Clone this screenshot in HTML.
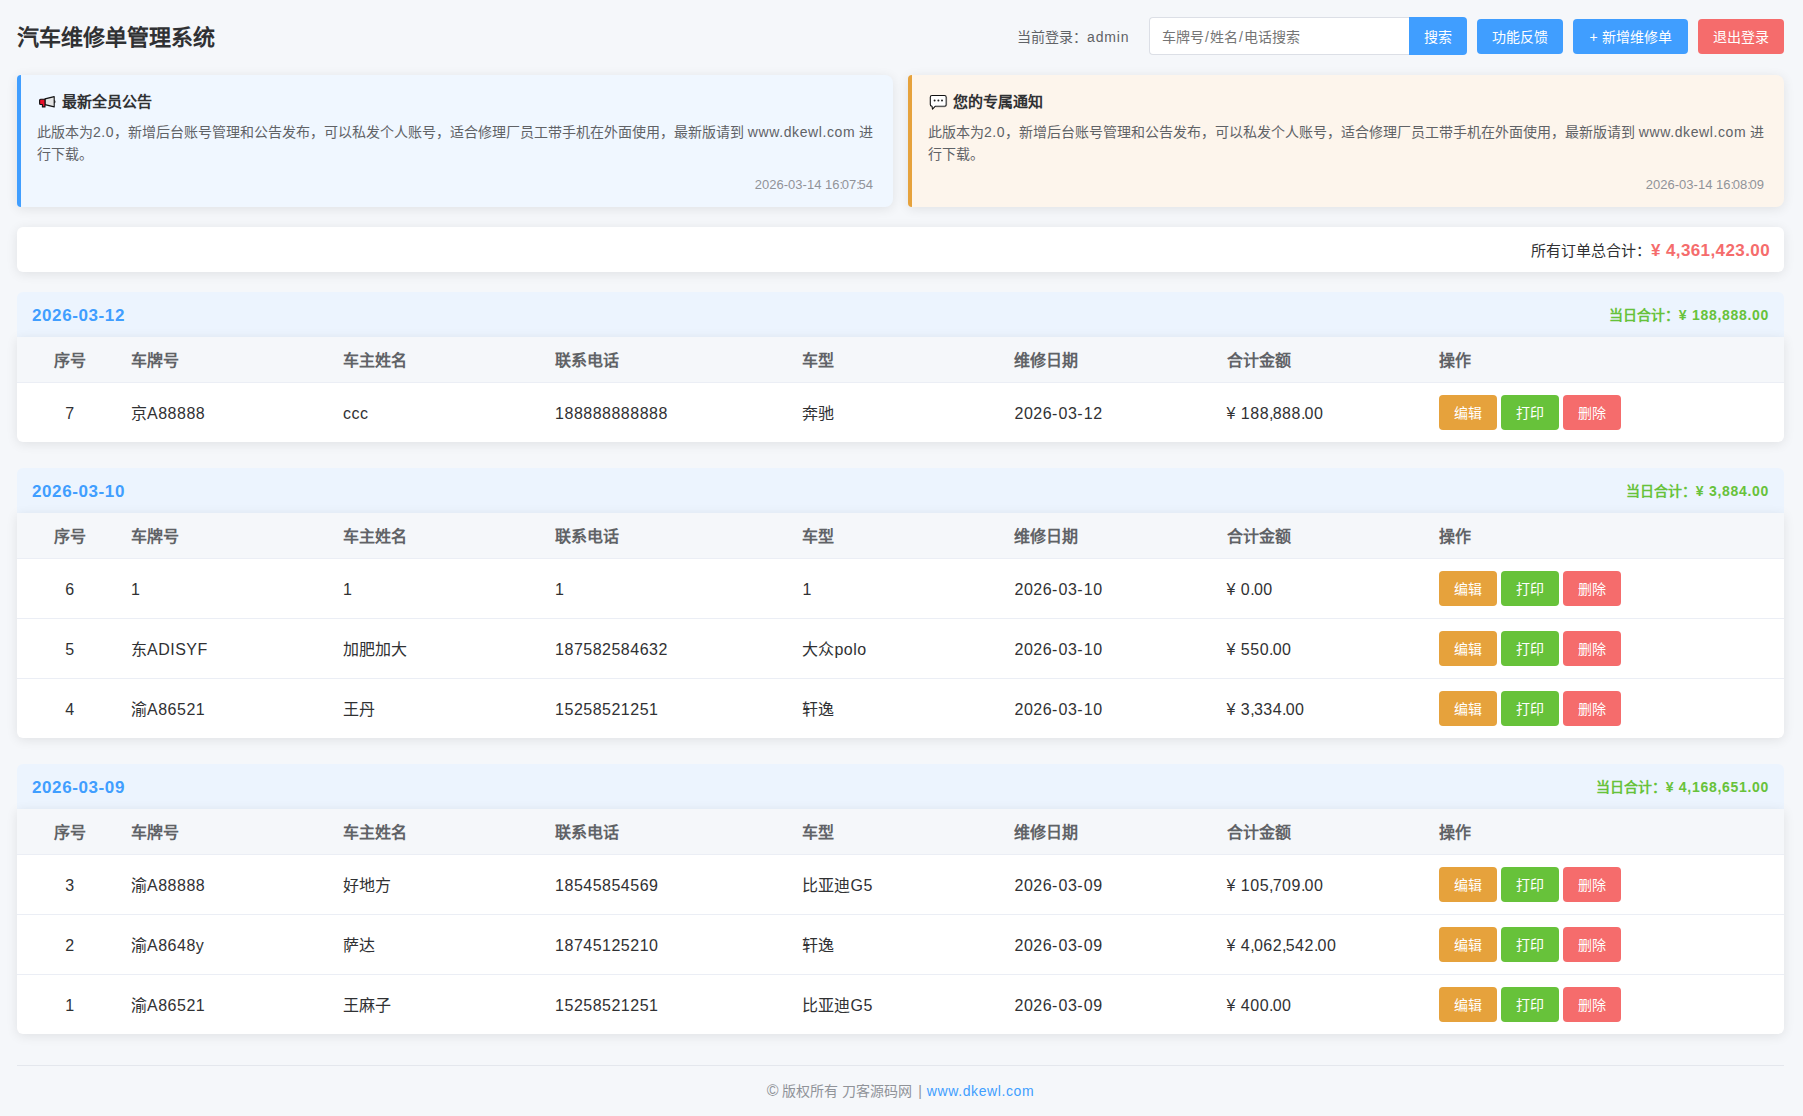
<!DOCTYPE html>
<html lang="zh-CN">
<head>
<meta charset="utf-8">
<title>汽车维修单管理系统</title>
<style>
*{box-sizing:border-box;margin:0;padding:0;}
html,body{width:1803px;height:1116px;overflow:hidden;}
body{background:#f5f7fa;font-family:"Liberation Sans",sans-serif;color:#303133;position:relative;}
.abs{position:absolute;}
.l{letter-spacing:0.5px;}
.c{letter-spacing:-0.85px;}
.h{letter-spacing:1.1px;}
.k{letter-spacing:-1.3px;}
.title{left:17px;top:23px;font-size:22px;line-height:30px;font-weight:bold;color:#303133;white-space:nowrap;}
.login{left:1017px;top:27px;font-size:14px;line-height:20px;color:#606266;white-space:nowrap;}
.search{left:1149px;top:17px;width:260px;height:38px;background:#fff;border:1px solid #dcdfe6;border-right:none;border-radius:4px 0 0 4px;font-size:14px;line-height:37px;padding-left:12px;padding-top:1px;color:#757575;white-space:nowrap;}
.sl{padding:0 1px;}
.btn{position:absolute;color:#fff;font-size:14px;text-align:center;white-space:nowrap;border-radius:4px;}
.sbtn{left:1409px;top:17px;width:58px;height:38px;line-height:40px;background:#409eff;border-radius:0 4px 4px 0;}
.hb{top:19px;height:35px;line-height:36px;}
.card{position:absolute;border-radius:6px;box-shadow:0 2px 12px rgba(0,0,0,0.09);}
.ann{top:75px;height:132px;width:876px;padding:16px 20px 0 16px;border-radius:4px 8px 8px 4px;}
.ann1{left:17px;background:#f0f7ff;border-left:4px solid #409eff;}
.ann2{left:908px;background:#fdf5ec;border-left:4px solid #e6a23c;}
.ann h4{font-size:15px;line-height:20px;font-weight:bold;color:#303133;white-space:nowrap;padding-left:25px;position:relative;top:1px;}
.ann h4 svg{position:absolute;}
.ann p{margin-top:10px;font-size:14px;line-height:22px;color:#606266;white-space:nowrap;}
.ann .ts{position:absolute;right:20px;top:101px;font-size:13px;line-height:18px;color:#909399;}
.total{left:17px;top:227px;width:1767px;height:44.5px;background:#fff;text-align:right;padding-right:14px;padding-top:2px;font-size:15px;line-height:44px;color:#303133;white-space:nowrap;}
.total b{color:#f56c6c;font-size:17px;letter-spacing:0.4px;}
.grp{position:absolute;left:17px;width:1767px;}
.tb{position:relative;background:#fff;border-radius:0 0 6px 6px;box-shadow:0 2px 12px rgba(0,0,0,0.09);overflow:hidden;}
.gh{height:44.6px;background:#ecf4fe;border-radius:6px 6px 0 0;position:relative;}
.gh .d{position:absolute;left:15px;top:0;line-height:47px;font-size:17px;font-weight:bold;color:#409eff;letter-spacing:0.6px;}
.gh .s{position:absolute;right:15px;top:0;line-height:46px;font-size:14px;font-weight:bold;color:#67c23a;}
.gh .s .l{letter-spacing:0.7px;}
table{width:100%;border-collapse:collapse;table-layout:fixed;}
th{height:46px;background:#f5f7fa;text-align:left;font-size:16px;font-weight:bold;color:#606266;padding:0 8px;border-bottom:1px solid #ebeef5;white-space:nowrap;}
td{height:60px;text-align:left;font-size:16px;line-height:22px;color:#303133;padding:3px 8px 1px 8px;border-bottom:1px solid #ebeef5;white-space:nowrap;}
tr:last-child td{border-bottom:none;height:59px;padding-top:4px;padding-bottom:0;}
th:first-child,td:first-child{text-align:center;}
td.op,tr:last-child td.op{padding-top:0;padding-bottom:0;}
.ob{display:inline-block;width:58px;height:35px;line-height:36px;text-align:center;color:#fff;font-size:14px;border-radius:4px;vertical-align:middle;}
.e{background:#e6a23c;}.p{background:#67c23a;}.x{background:#f56c6c;}
.foot{left:17px;top:1065px;width:1767px;border-top:1px solid #e4e7ed;text-align:center;padding-top:15px;font-size:14px;line-height:20px;color:#909399;white-space:nowrap;}
.foot .lk{color:#409eff;}

</style>
</head>
<body>
<div class="abs title">汽车维修单管理系统</div>
<div class="abs login">当前登录：<span class="l" style="letter-spacing:0.85px">admin</span></div>
<div class="abs search">车牌号<span class="sl">/</span>姓名<span class="sl">/</span>电话搜索</div>
<div class="btn sbtn">搜索</div>
<div class="btn hb" style="left:1477px;width:86px;background:#409eff;">功能反馈</div>
<div class="btn hb" style="left:1573px;width:115px;background:#409eff;">+ 新增维修单</div>
<div class="btn hb" style="left:1698px;width:86px;background:#f56c6c;">退出登录</div>

<div class="card ann ann1">
<h4><svg style="left:1px;top:3px;" width="19" height="14" viewBox="0 0 19 14"><path d="M7 3.9 L16.2 1.6 L16.2 11.9 L7 9.6 Z" fill="#e3e3e3" stroke="#111" stroke-width="1.1" stroke-linejoin="round"/><path d="M16.2 5.4 Q17.6 6.7 16.2 8" fill="none" stroke="#222" stroke-width="1.2"/><path d="M2.6 4.3 H7 V11.9 H4.4 V9.5 H2.6 Q1.6 9.5 1.6 8.5 V5.3 Q1.6 4.3 2.6 4.3 Z" fill="#e8102a" stroke="#111" stroke-width="1.1" stroke-linejoin="round"/></svg>最新全员公告</h4>
<p>此版本为<span class="l">2.0</span>，新增后台账号管理和公告发布，可以私发个人账号，适合修理厂员工带手机在外面使用，最新版请到 <span class="l" style="letter-spacing:0.6px">www.dkewl.com</span> 进<br>行下载。</p>
<div class="ts">2026-03-14 16<span class="k">:</span>07<span class="k">:</span>54</div>
</div>
<div class="card ann ann2">
<h4><svg style="left:1px;top:2px;" width="19" height="17" viewBox="0 0 19 17"><path d="M3 1.5 H15.4 Q17.2 1.5 17.2 3.3 V10.4 Q17.2 12.2 15.4 12.2 H6.4 L3.5 15.2 L3 12.2 Q1.3 12 1.3 10.4 V3.3 Q1.3 1.5 3 1.5 Z" fill="#fff" stroke="#111" stroke-width="1.1" stroke-linejoin="round"/><path d="M17.6 3.5 V10.6 Q17.6 12.7 15.5 12.7 H6.8" fill="none" stroke="#666" stroke-width="0.8"/><circle cx="5.6" cy="6.6" r="1" fill="#222"/><circle cx="9.4" cy="6.6" r="1" fill="#222"/><circle cx="13" cy="6.6" r="1" fill="#222"/></svg>您的专属通知</h4>
<p>此版本为<span class="l">2.0</span>，新增后台账号管理和公告发布，可以私发个人账号，适合修理厂员工带手机在外面使用，最新版请到 <span class="l" style="letter-spacing:0.6px">www.dkewl.com</span> 进<br>行下载。</p>
<div class="ts">2026-03-14 16<span class="k">:</span>08<span class="k">:</span>09</div>
</div>

<div class="card total">所有订单总合计：<b>¥ 4,361,423.00</b></div>

<div class="grp" style="top:292px;">
<div class="gh"><span class="d">2026-03-12</span><span class="s">当日合计：<span class="l">¥ 188,888.00</span></span></div>
<div class="tb"><table><colgroup><col style="width:6%"><col style="width:12%"><col style="width:12%"><col style="width:14%"><col style="width:12%"><col style="width:12%"><col style="width:12%"><col style="width:20%"></colgroup>
<tr><th>序号</th><th>车牌号</th><th>车主姓名</th><th>联系电话</th><th>车型</th><th>维修日期</th><th>合计金额</th><th>操作</th></tr>
<tr><td><span class="l">7</span></td><td>京<span class="l">A88888</span></td><td><span class="l">ccc</span></td><td><span class="l">188888888888</span></td><td>奔驰</td><td><span class="l">2026<span class="h">-</span>03<span class="h">-</span>12</span></td><td><span class="l">¥ 188<span class="c">,</span>888<span class="c">.</span>00</span></td><td class="op"><span class="ob e">编辑</span> <span class="ob p">打印</span> <span class="ob x">删除</span></td></tr>
</table></div></div>
<div class="grp" style="top:468px;">
<div class="gh"><span class="d">2026-03-10</span><span class="s">当日合计：<span class="l">¥ 3,884.00</span></span></div>
<div class="tb"><table><colgroup><col style="width:6%"><col style="width:12%"><col style="width:12%"><col style="width:14%"><col style="width:12%"><col style="width:12%"><col style="width:12%"><col style="width:20%"></colgroup>
<tr><th>序号</th><th>车牌号</th><th>车主姓名</th><th>联系电话</th><th>车型</th><th>维修日期</th><th>合计金额</th><th>操作</th></tr>
<tr><td><span class="l">6</span></td><td><span class="l">1</span></td><td><span class="l">1</span></td><td><span class="l">1</span></td><td><span class="l">1</span></td><td><span class="l">2026<span class="h">-</span>03<span class="h">-</span>10</span></td><td><span class="l">¥ 0<span class="c">.</span>00</span></td><td class="op"><span class="ob e">编辑</span> <span class="ob p">打印</span> <span class="ob x">删除</span></td></tr>
<tr><td><span class="l">5</span></td><td>东<span class="l">ADISYF</span></td><td>加肥加大</td><td><span class="l">187582584632</span></td><td>大众<span class="l">polo</span></td><td><span class="l">2026<span class="h">-</span>03<span class="h">-</span>10</span></td><td><span class="l">¥ 550<span class="c">.</span>00</span></td><td class="op"><span class="ob e">编辑</span> <span class="ob p">打印</span> <span class="ob x">删除</span></td></tr>
<tr><td><span class="l">4</span></td><td>渝<span class="l">A86521</span></td><td>王丹</td><td><span class="l">15258521251</span></td><td>轩逸</td><td><span class="l">2026<span class="h">-</span>03<span class="h">-</span>10</span></td><td><span class="l">¥ 3<span class="c">,</span>334<span class="c">.</span>00</span></td><td class="op"><span class="ob e">编辑</span> <span class="ob p">打印</span> <span class="ob x">删除</span></td></tr>
</table></div></div>
<div class="grp" style="top:764px;">
<div class="gh"><span class="d">2026-03-09</span><span class="s">当日合计：<span class="l">¥ 4,168,651.00</span></span></div>
<div class="tb"><table><colgroup><col style="width:6%"><col style="width:12%"><col style="width:12%"><col style="width:14%"><col style="width:12%"><col style="width:12%"><col style="width:12%"><col style="width:20%"></colgroup>
<tr><th>序号</th><th>车牌号</th><th>车主姓名</th><th>联系电话</th><th>车型</th><th>维修日期</th><th>合计金额</th><th>操作</th></tr>
<tr><td><span class="l">3</span></td><td>渝<span class="l">A88888</span></td><td>好地方</td><td><span class="l">18545854569</span></td><td>比亚迪<span class="l">G5</span></td><td><span class="l">2026<span class="h">-</span>03<span class="h">-</span>09</span></td><td><span class="l">¥ 105<span class="c">,</span>709<span class="c">.</span>00</span></td><td class="op"><span class="ob e">编辑</span> <span class="ob p">打印</span> <span class="ob x">删除</span></td></tr>
<tr><td><span class="l">2</span></td><td>渝<span class="l">A8648y</span></td><td>萨达</td><td><span class="l">18745125210</span></td><td>轩逸</td><td><span class="l">2026<span class="h">-</span>03<span class="h">-</span>09</span></td><td><span class="l">¥ 4<span class="c">,</span>062<span class="c">,</span>542<span class="c">.</span>00</span></td><td class="op"><span class="ob e">编辑</span> <span class="ob p">打印</span> <span class="ob x">删除</span></td></tr>
<tr><td><span class="l">1</span></td><td>渝<span class="l">A86521</span></td><td>王麻子</td><td><span class="l">15258521251</span></td><td>比亚迪<span class="l">G5</span></td><td><span class="l">2026<span class="h">-</span>03<span class="h">-</span>09</span></td><td><span class="l">¥ 400<span class="c">.</span>00</span></td><td class="op"><span class="ob e">编辑</span> <span class="ob p">打印</span> <span class="ob x">删除</span></td></tr>
</table></div></div>

<div class="abs foot"><span style="font-size:16px;line-height:16px">©</span> 版权所有 刀客源码网 <span style="padding:0 1px 0 2px">|</span> <span class="l lk" style="letter-spacing:0.6px">www.dkewl.com</span></div>

</body>
</html>
